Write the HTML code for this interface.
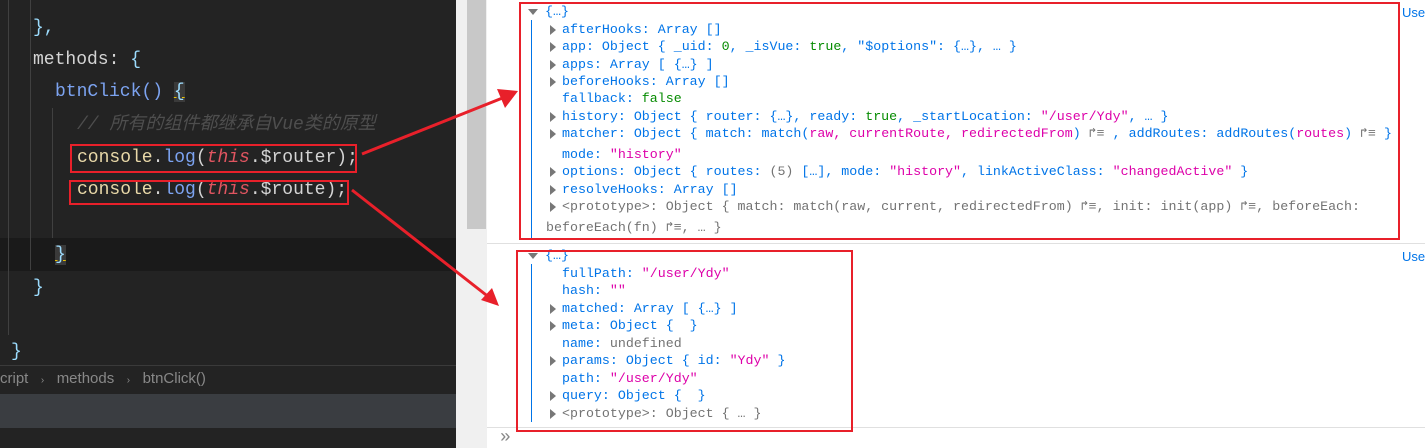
<!DOCTYPE html><html><head><style>
body{margin:0;width:1425px;height:448px;overflow:hidden;position:relative;background:#fff;font-family:"Liberation Mono",monospace}
.ed{position:absolute;left:0;top:0;width:456px;height:448px;background:#232323}
.cl{position:absolute;font-size:18px;color:#d4d4d4;white-space:pre;line-height:32px}
.r{position:absolute;font-size:13.3px;white-space:pre;line-height:18px;height:18px;color:#0074e8}
.g{color:#058b00}.s{color:#dd00a9}.p{color:#737373}
.t{position:absolute;width:0;height:0;border-top:5px solid transparent;border-bottom:5px solid transparent;border-left:6px solid #777}
.d{position:absolute;width:0;height:0;border-left:5px solid transparent;border-right:5px solid transparent;border-top:6px solid #777}
</style></head><body>
<div class="ed">
<div style="position:absolute;left:0;top:238px;width:456px;height:33px;background:#1a1a1a"></div>
<div style="position:absolute;left:30px;top:0;width:1px;height:270px;background:#404040"></div>
<div style="position:absolute;left:52px;top:108px;width:1px;height:130px;background:#404040"></div>
<div style="position:absolute;left:8px;top:0;width:1px;height:335px;background:#404040"></div>
<div class="cl" style="left:33px;top:12px;color:#9cdcfe">},</div>
<div class="cl" style="left:33px;top:44px">methods: <span style="color:#9cdcfe">{</span></div>
<div class="cl" style="left:55px;top:76px;color:#7ca3f0">btnClick() <span style="background:#3a3a3a;color:#9cdcfe;text-decoration:underline;text-decoration-color:#e8c000">{</span></div>
<div class="cl" style="left:77px;top:109px;color:#4e4e4e;font-style:italic;font-family:'Liberation Mono','Noto Sans CJK SC',monospace">// 所有的组件都继承自Vue类的原型</div>
<div class="cl" style="left:77px;top:142px"><span style="color:#e8d8a8">console</span>.<span style="color:#7ca3f0">log</span>(<span style="color:#e05560;font-style:italic">this</span>.$router);</div>
<div class="cl" style="left:77px;top:174px"><span style="color:#e8d8a8">console</span>.<span style="color:#7ca3f0">log</span>(<span style="color:#e05560;font-style:italic">this</span>.$route);</div>
<div class="cl" style="left:55px;top:239px;color:#9cdcfe"><span style="background:#3a3a3a;text-decoration:underline;text-decoration-color:#e8c000">}</span></div>
<div class="cl" style="left:33px;top:272px;color:#9cdcfe">}</div>
<div class="cl" style="left:11px;top:336px;color:#9cdcfe">}</div>
<div style="position:absolute;left:0;top:365px;width:456px;height:1px;background:#3a3a3a"></div>
<div style="position:absolute;left:0;top:370px;font:15px 'Liberation Sans',sans-serif;color:#888;white-space:pre">cript   <span style="font-size:10px">›</span>   methods   <span style="font-size:10px">›</span>   btnClick()</div>
<div style="position:absolute;left:0;top:394px;width:456px;height:34px;background:#3a3d41"></div>
</div>
<div style="position:absolute;left:456px;top:0;width:31px;height:448px;background:#f0f0f0"></div>
<div style="position:absolute;left:467px;top:0;width:19px;height:229px;background:#c8c8c8"></div>
<div style="position:absolute;left:487px;top:243px;width:938px;height:1px;background:#e0e0e0"></div>
<div style="position:absolute;left:487px;top:427px;width:938px;height:1px;background:#e0e0e0"></div>
<div style="position:absolute;left:500px;top:428px;font-size:18px;color:#888">»</div>
<div style="position:absolute;left:1402px;top:5px;font:13px 'Liberation Sans',sans-serif;color:#0074e8">Use</div>
<div style="position:absolute;left:1402px;top:249px;font:13px 'Liberation Sans',sans-serif;color:#0074e8">Use</div>
<div style="position:absolute;left:531px;top:20px;width:1px;height:220px;background:#0074e8"></div>
<div style="position:absolute;left:531px;top:264px;width:1px;height:158px;background:#0074e8"></div>

<div class="d" style="left:528px;top:9px"></div><div class="r" style="left:545px;top:3px">{…}</div>
<div class="t" style="left:550px;top:25px"></div><div class="r" style="left:562px;top:21px">afterHooks: Array []</div>
<div class="t" style="left:550px;top:42px"></div><div class="r" style="left:562px;top:38px">app: Object { _uid: <span class="g">0</span>, _isVue: <span class="g">true</span>, "$options": {…}, … }</div>
<div class="t" style="left:550px;top:60px"></div><div class="r" style="left:562px;top:56px">apps: Array [ {…} ]</div>
<div class="t" style="left:550px;top:77px"></div><div class="r" style="left:562px;top:73px">beforeHooks: Array []</div>
<div class="r" style="left:562px;top:90px">fallback: <span class="g">false</span></div>
<div class="t" style="left:550px;top:112px"></div><div class="r" style="left:562px;top:108px">history: Object { router: {…}, ready: <span class="g">true</span>, _startLocation: <span class="s">"/user/Ydy"</span>, … }</div>
<div class="t" style="left:550px;top:129px"></div><div class="r" style="left:562px;top:125px">matcher: Object { match: match(<span class="s">raw, currentRoute, redirectedFrom</span>) <span class="p">↱≡</span> , addRoutes: addRoutes(<span class="s">routes</span>) <span class="p">↱≡</span> }</div>
<div class="r" style="left:562px;top:146px">mode: <span class="s">"history"</span></div>
<div class="t" style="left:550px;top:167px"></div><div class="r" style="left:562px;top:163px">options: Object { routes: <span class="p">(5)</span> […], mode: <span class="s">"history"</span>, linkActiveClass: <span class="s">"changedActive"</span> }</div>
<div class="t" style="left:550px;top:185px"></div><div class="r" style="left:562px;top:181px">resolveHooks: Array []</div>
<div class="t" style="left:550px;top:202px"></div><div class="r p" style="left:562px;top:198px">&lt;prototype&gt;: Object { match: match(raw, current, redirectedFrom) ↱≡, init: init(app) ↱≡, beforeEach:</div>
<div class="r p" style="left:546px;top:219px">beforeEach(fn) ↱≡, … }</div>

<div class="d" style="left:528px;top:253px"></div><div class="r" style="left:545px;top:247px">{…}</div>
<div class="r" style="left:562px;top:265px">fullPath: <span class="s">"/user/Ydy"</span></div>
<div class="r" style="left:562px;top:282px">hash: <span class="s">""</span></div>
<div class="t" style="left:550px;top:304px"></div><div class="r" style="left:562px;top:300px">matched: Array [ {…} ]</div>
<div class="t" style="left:550px;top:321px"></div><div class="r" style="left:562px;top:317px">meta: Object {  }</div>
<div class="r" style="left:562px;top:335px">name: <span class="p">undefined</span></div>
<div class="t" style="left:550px;top:356px"></div><div class="r" style="left:562px;top:352px">params: Object { id: <span class="s">"Ydy"</span> }</div>
<div class="r" style="left:562px;top:370px">path: <span class="s">"/user/Ydy"</span></div>
<div class="t" style="left:550px;top:391px"></div><div class="r" style="left:562px;top:387px">query: Object {  }</div>
<div class="t" style="left:550px;top:409px"></div><div class="r p" style="left:562px;top:405px">&lt;prototype&gt;: Object { … }</div>

<div style="position:absolute;left:519px;top:2px;width:877px;height:234px;border:2px solid #e8202a"></div>
<div style="position:absolute;left:516px;top:250px;width:333px;height:178px;border:2px solid #e8202a"></div>
<div style="position:absolute;left:70px;top:144px;width:283px;height:25px;border:2px solid #e8202a"></div>
<div style="position:absolute;left:69px;top:180px;width:276px;height:21px;border:2px solid #e8202a"></div>
<svg style="position:absolute;left:0;top:0" width="1425" height="448">
<line x1="362" y1="154" x2="505" y2="97" stroke="#e8202a" stroke-width="3"/>
<polygon points="518,91 497,89 505,108" fill="#e8202a"/>
<line x1="352" y1="190" x2="490" y2="298" stroke="#e8202a" stroke-width="3"/>
<polygon points="499,306 481,300 492,288" fill="#e8202a"/>
</svg>
</body></html>
